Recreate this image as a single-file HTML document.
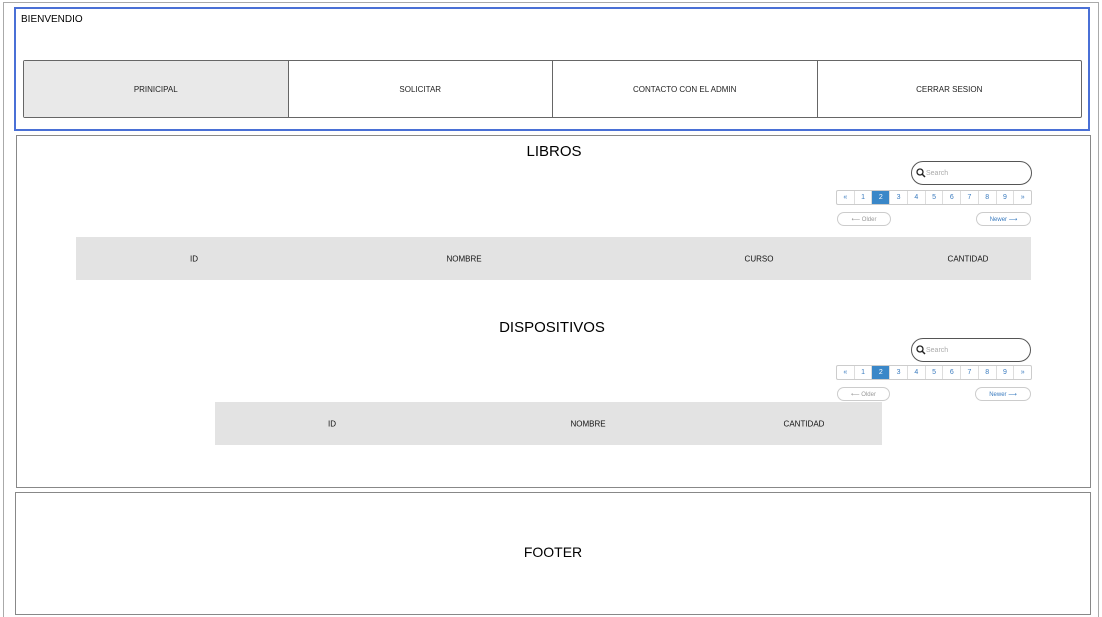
<!DOCTYPE html>
<html style="overflow:hidden;height:617px"><head><style>
body{margin:0;width:1102px;height:617px;background:#fff;font-family:"Liberation Sans",sans-serif;position:relative;overflow:hidden}
.a{position:absolute;box-sizing:border-box}
.nav{display:flex;}
.nav div{flex:1;border-right:1px solid #666;display:flex;align-items:center;justify-content:center;font-size:8px;color:#222}
.nav div:last-child{border-right:none}
.pg{display:flex;border:1px solid #ccc;border-radius:2px;background:#fff}
.pg span{flex:1;border-right:1px solid #ddd;font-size:7px;color:#3a7bbf;display:flex;align-items:center;justify-content:center}
.pg span:last-child{border-right:none}
.pg span.on{background:#3a87c8;color:#fff}
.btn{border:1px solid #ccc;border-radius:8px;font-size:6px;display:flex;align-items:center;justify-content:center}
.srch{border:1px solid #555;border-radius:12px;font-size:7px;color:#aaa;display:flex;align-items:center;padding-left:4px}
.tb{background:#e3e3e3;font-size:8px;color:#111}
.tb span{position:absolute;top:50%;transform:translate(-50%,-50%)}
h2{margin:0;font-weight:normal;font-size:15px;position:absolute;transform:translateX(-50%)}
</style></head><body>
<div class="a" style="left:3px;top:2px;width:1096px;height:620px;border:1px solid #aaa;border-bottom:none"></div>
<div class="a" style="left:14px;top:7px;width:1076px;height:124px;border:2px solid #4a70d6;background:#fff"></div>
<div class="a" style="left:21px;top:14px;font-size:10px">BIENVENDIO</div>
<div class="a nav" style="left:23px;top:60px;width:1059px;height:58px;border:1px solid #666;border-radius:2px;background:#fff">
<div style="background:#e9e9e9">PRINICIPAL</div><div>SOLICITAR</div><div>CONTACTO CON EL ADMIN</div><div>CERRAR SESION</div></div>
<div class="a" style="left:16px;top:135px;width:1075px;height:353px;border:1px solid #888"></div>
<h2 style="left:554px;top:143px">LIBROS</h2>
<div class="a srch" style="left:911px;top:161px;width:121px;height:24px"><svg width="10" height="10" viewBox="0 0 10 10"><circle cx="4" cy="4" r="3" fill="none" stroke="#222" stroke-width="1.3"/><path d="M6 6L9 9" stroke="#222" stroke-width="1.5"/></svg>Search</div>
<div class="a pg" style="left:836px;top:190px;width:196px;height:15px"><span>«</span><span>1</span><span class="on">2</span><span>3</span><span>4</span><span>5</span><span>6</span><span>7</span><span>8</span><span>9</span><span>»</span></div>
<div class="a btn" style="left:837px;top:212px;width:54px;height:14px;color:#999">⟵ Older</div>
<div class="a btn" style="left:976px;top:212px;width:55px;height:14px;color:#3a7bbf">Newer ⟶</div>
<div class="a tb" style="left:76px;top:237px;width:955px;height:43px"><span style="left:118px">ID</span><span style="left:388px">NOMBRE</span><span style="left:683px">CURSO</span><span style="left:892px">CANTIDAD</span></div>
<h2 style="left:552px;top:319px">DISPOSITIVOS</h2>
<div class="a srch" style="left:911px;top:338px;width:120px;height:24px"><svg width="10" height="10" viewBox="0 0 10 10"><circle cx="4" cy="4" r="3" fill="none" stroke="#222" stroke-width="1.3"/><path d="M6 6L9 9" stroke="#222" stroke-width="1.5"/></svg>Search</div>
<div class="a pg" style="left:836px;top:365px;width:196px;height:15px"><span>«</span><span>1</span><span class="on">2</span><span>3</span><span>4</span><span>5</span><span>6</span><span>7</span><span>8</span><span>9</span><span>»</span></div>
<div class="a btn" style="left:837px;top:387px;width:53px;height:14px;color:#999">⟵ Older</div>
<div class="a btn" style="left:975px;top:387px;width:56px;height:14px;color:#3a7bbf">Newer ⟶</div>
<div class="a tb" style="left:215px;top:402px;width:667px;height:43px"><span style="left:117px">ID</span><span style="left:373px">NOMBRE</span><span style="left:589px">CANTIDAD</span></div>
<div class="a" style="left:15px;top:492px;width:1076px;height:123px;border:1px solid #888"></div>
<h2 style="left:553px;top:544px;font-size:14px">FOOTER</h2>
</body></html>
